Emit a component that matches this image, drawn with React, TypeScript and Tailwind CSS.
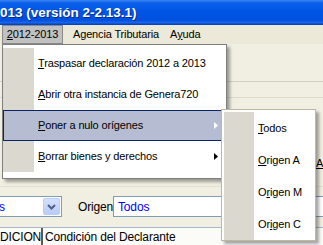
import React from "react";

const Arrow = ({ color }: { color: string }) => (
  <svg width="4" height="7" viewBox="0 0 4 7" className="block">
    <polygon points="0,0 4,3.5 0,7" fill={color} />
  </svg>
);

function MenuItem({
  children,
  active,
  sub,
}: {
  children: React.ReactNode;
  active?: boolean;
  sub?: boolean;
}) {
  if (active) {
    return (
      <div className="h-[31px] flex items-center border border-[#0A246A] bg-[#B6BDD2] pl-[34px] pr-[7px]">
        <span className="flex-1 text-black">{children}</span>
        {sub && <Arrow color="#FFFFFF" />}
      </div>
    );
  }
  return (
    <div className="h-[31px] flex items-center">
      <div className="w-[31px] h-full bg-[#DAD8CF]" />
      <span className="flex-1 pl-[4px] text-black">{children}</span>
      {sub && (
        <div className="pr-[8px]">
          <Arrow color="#000000" />
        </div>
      )}
    </div>
  );
}

function SubItem({ children }: { children: React.ReactNode }) {
  return (
    <div className="h-[32px] flex items-center">
      <div className="w-[30px] h-full bg-[#DAD8CF]" />
      <span className="pl-[4px] text-black">{children}</span>
    </div>
  );
}

export default function App() {
  return (
    <div className="relative w-[323px] h-[245px] overflow-hidden bg-[#F1EFE2] text-[11px] tracking-[-0.15px] font-['Liberation_Sans',Tahoma,sans-serif] select-none">
      {/* Title bar */}
      <div className="h-[25px] bg-[linear-gradient(to_bottom,#3D86F2_0%,#0A5FEA_12%,#0055E5_45%,#0050DE_80%,#1A64E8_90%,#003DB8_100%)] flex items-center">
        <span className="text-white font-bold text-[13.5px] tracking-normal leading-none whitespace-nowrap [text-shadow:1px_1px_0_#0A2A8A]">
          013 (versión 2-2.13.1)
        </span>
      </div>

      {/* Menu bar */}
      <div className="h-[19px] bg-[#ECE9D8] flex items-stretch text-[11px]">
        <div className="ml-[2px] w-[61px] border border-[#8A8A8A] bg-[#C1C1C1] flex items-center justify-center">
          <span>
            <span className="underline">2</span>012-2013
          </span>
        </div>
        <div className="pl-[10px] flex items-center">Agencia Tributaria</div>
        <div className="pl-[11px] flex items-center">
          A<span className="underline">y</span>uda
        </div>
      </div>

      {/* Underlying form */}
      <div className="flex flex-col">
        <div className="h-[37px]" />
        <div className="h-[16px] border-t border-[#D3CFBE]" />
        <div className="h-[89px] border-t border-[#DEDACB] flex flex-col">
          <div className="h-[58px]" />
          <div className="pl-[316px] leading-[14px] whitespace-nowrap">
            <span className="underline">A</span>
          </div>
        </div>
        <div className="h-[10px] border-t border-[#E2DFD2]" />
        <div className="h-[21px] flex items-stretch text-[12px]">
          <div className="w-[62px] flex border border-[#7F9DB9] border-l-0 bg-white">
            <div className="flex-1 flex items-center text-[#0000FF] leading-none -ml-[1px]">s</div>
            <div className="w-[17px] m-[1px] rounded-[2px] bg-[linear-gradient(to_bottom,#D4E0FD,#B8CCF8)] border border-[#B9CCF6] flex items-center justify-center">
              <svg width="9" height="6" viewBox="0 0 9 6">
                <path d="M1 1 L4.5 4.5 L8 1" fill="none" stroke="#4D6185" strokeWidth="2" />
              </svg>
            </div>
          </div>
          <div className="w-[51px] flex items-end pb-[1px] pl-[16px]">Origen</div>
          <div className="flex-1 border border-[#7F9DB9] border-r-0 bg-white flex items-center pl-[4px] text-[#0000FF]">
            Todos
          </div>
        </div>
        <div className="h-[10px]" />
        <div className="h-[18px] border-t border-[#A7B8CC] bg-[#FBFBF8] flex items-center text-[12px]">
          <div className="w-[43px] h-full flex items-center border-r-2 border-[#5C5A4C] whitespace-nowrap">
            DICION
          </div>
          <div className="pl-[2px] whitespace-nowrap">Condición del Declarante</div>
        </div>
      </div>

      {/* Main dropdown menu */}
      <div className="absolute left-[2px] top-[44px] w-[225px] h-[135px] bg-white border border-[#7E7E7E] shadow-[3px_3px_3px_rgba(0,0,0,0.35)] pt-[3px] flex flex-col">
        <MenuItem>
          <span className="underline">T</span>raspasar declaración 2012 a 2013
        </MenuItem>
        <MenuItem>
          <span className="underline">A</span>brir otra instancia de Genera720
        </MenuItem>
        <MenuItem active sub>
          <span className="underline">P</span>oner a nulo orígenes
        </MenuItem>
        <MenuItem sub>
          <span className="underline">B</span>orrar bienes y derechos
        </MenuItem>
      </div>

      {/* Submenu */}
      <div className="absolute left-[221px] top-[109px] w-[95px] h-[132px] bg-white border border-[#BDB8A2] shadow-[3px_3px_3px_rgba(0,0,0,0.35)] pt-[2px] px-[2px] flex flex-col">
        <SubItem>
          <span className="underline">T</span>odos
        </SubItem>
        <SubItem>
          <span className="underline">O</span>rigen A
        </SubItem>
        <SubItem>
          O<span className="underline">r</span>igen M
        </SubItem>
        <SubItem>
          Or<span className="underline">i</span>gen C
        </SubItem>
      </div>
    </div>
  );
}
